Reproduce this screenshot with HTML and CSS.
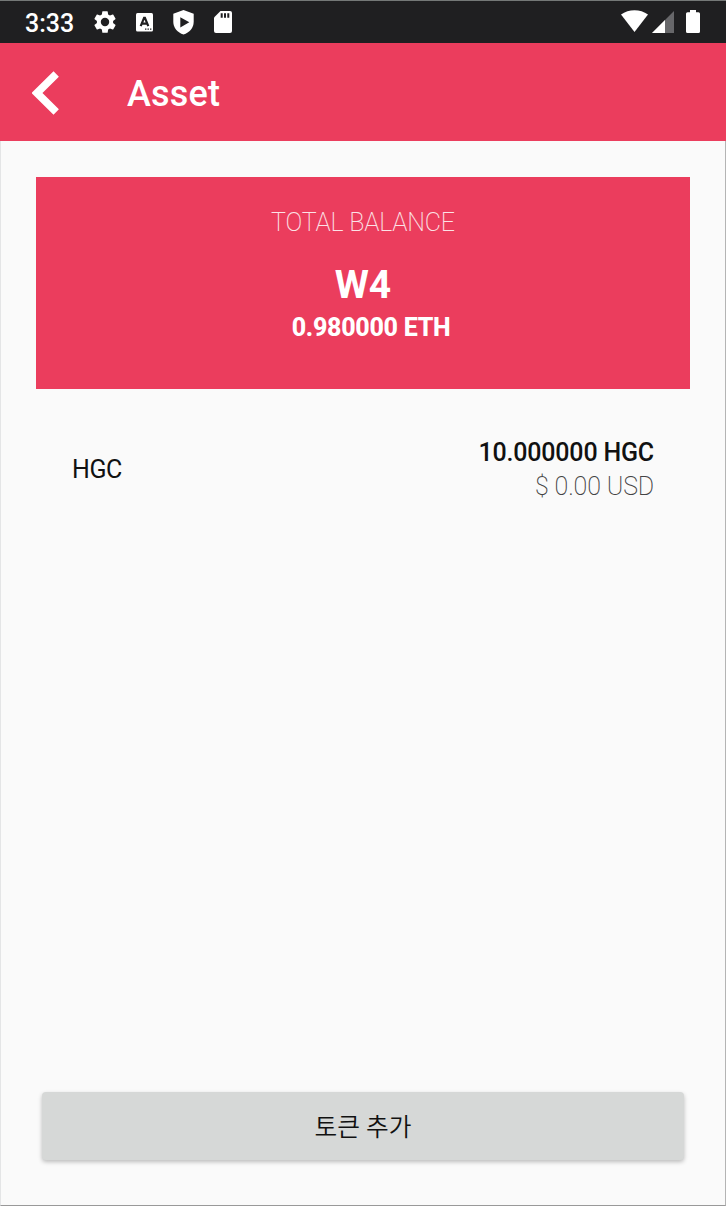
FILE: index.html
```html
<!DOCTYPE html>
<html lang="ko">
<head>
<meta charset="utf-8">
<title>Asset</title>
<link rel="stylesheet" href="styles.css">
</head>
<body>
<div class="screen">
  <div class="status">
    <span class="clock">3:33</span>
    <svg class="gear" width="26" height="26" viewBox="0 0 24 24"><path fill="#fff" d="M19.43 12.98c.04-.32.07-.64.07-.98s-.03-.66-.07-.98l2.11-1.65c.19-.15.24-.42.12-.64l-2-3.46c-.12-.22-.39-.3-.61-.22l-2.49 1c-.52-.4-1.08-.73-1.69-.98l-.38-2.65C14.46 2.18 14.25 2 14 2h-4c-.25 0-.46.18-.49.42l-.38 2.65c-.61.25-1.17.59-1.69.98l-2.49-1c-.23-.09-.49 0-.61.22l-2 3.46c-.13.22-.07.49.12.64l2.11 1.65c-.04.32-.07.65-.07.98s.03.66.07.98l-2.11 1.65c-.19.15-.24.42-.12.64l2 3.46c.12.22.39.3.61.22l2.49-1c.52.4 1.08.73 1.69.98l.38 2.65c.03.24.24.42.49.42h4c.25 0 .46-.18.49-.42l.38-2.65c.61-.25 1.17-.59 1.69-.98l2.49 1c.23.09.49 0 .61-.22l2-3.46c.12-.22.07-.49-.12-.64zM12 15.9a3.9 3.9 0 1 1 0-7.8 3.9 3.9 0 0 1 0 7.8z"/></svg>
    <svg class="letter" width="17" height="19" viewBox="0 0 17 19"><rect width="17" height="18.6" rx="1.5" fill="#fff"/><path d="M4.7 13.2 8.1 4.800h.8l3.400 8.400M6 10.700h5" fill="none" stroke="#1f1f21" stroke-width="2.200"/><path d="M9 15.500h1.400v1.300H9zM11.500 15.500h1.400v1.300h-1.400zM14 15.500h1.400v1.300H14z" fill="#1f1f21"/></svg>
    <svg class="shield" width="21" height="25" viewBox="0 0 21 25"><path fill="#fff" d="M10.5 0 20.7 3.8v8c0 6.2-4.2 11-10.2 12.7C4.5 22.800.3 18 .3 11.800v-8z"/><path fill="#1f1f21" d="M7.300 7.200v10.200l9-5.100z"/></svg>
    <svg class="card-icon" width="18" height="22" viewBox="0 0 18 22"><path fill="#fff" d="M6.500 0H16a2 2 0 0 1 2 2v18a2 2 0 0 1-2 2H2a2 2 0 0 1-2-2V6.500z"/><path fill="#1f1f21" d="M6.700 2.300h2v4.500h-2zM10 2.300h2v4.500h-2zM13.300 2.300h2v4.500h-2z"/></svg>
    <svg class="wifi" width="27" height="22" viewBox="0 0 28 22" preserveAspectRatio="none"><path fill="#fff" d="M0 4.600C8-1.300 20-1.300 28 4.600L14 22z"/></svg>
    <svg class="signal" width="22" height="22" viewBox="0 0 22 21" preserveAspectRatio="none"><path fill="#67676a" d="M22 0v21H0z"/><path fill="#fff" d="M13 8.600V21H0z"/></svg>
    <svg class="battery" width="14" height="23" viewBox="0 0 14 23"><path fill="#fff" d="M4 0h6v2.300h2.500A1.500 1.500 0 0 1 14 3.800v17.700a1.500 1.500 0 0 1-1.500 1.500h-11A1.500 1.500 0 0 1 0 21.500V3.800a1.500 1.500 0 0 1 1.500-1.500H4z"/></svg>
  </div>
  <header class="appbar">
    <svg class="back" width="28" height="44" viewBox="0 0 28 44"><path d="M24.200 3 5 22l19.200 19" fill="none" stroke="#fff" stroke-width="7.600"/></svg>
    <h1 class="title">Asset</h1>
  </header>
  <main class="content">
    <section class="balance">
      <div class="label">TOTAL BALANCE</div>
      <div class="wallet">W4</div>
      <div class="amount">0.980000 ETH</div>
    </section>
    <section class="token">
      <div class="symbol">HGC</div>
      <div class="values">
        <div class="quantity">10.000000 HGC</div>
        <div class="usd">$ 0.00 USD</div>
      </div>
    </section>
    <button class="add">토큰 추가</button>
  </main>
</div>
</body>
</html>
```
FILE: styles.css
```css
* { box-sizing: border-box; }
body { margin: 0; font-family: Roboto, "Noto Sans CJK KR", sans-serif; }
.screen {
  width: 726px;
  height: 1206px;
  display: flex;
  flex-direction: column;
  background: #fafafa;
  border-right: 1px solid #b4b4b4;
  border-bottom: 1px solid #999;
  border-left: 1px solid #e4e5e6;
}
.status {
  height: 43px;
  flex: none;
  display: flex;
  align-items: center;
  background: #1f1f21;
  border-top: 1px solid #747877;
  margin: 0 -1px;
  padding: 0 26px 0 25px;
}
.clock { padding-top: 3px; font-size: 25px; font-weight: 480; line-height: 30px; color: #fff; width: 67px; }
.letter { margin-left: 18px; }
.shield { margin-left: 20px; }
.card-icon { margin-left: 20px; }
.wifi { margin: 0 0 2px auto; }
.signal { margin: 0 0 1px 4px; }
.battery { margin: 0 0 1px 12px; }
.appbar {
  height: 98px;
  flex: none;
  display: flex;
  align-items: center;
  margin: 0 -1px;
  padding: 1px 0 0 32px;
  background: #eb3d5d;
}
.title { margin: 3px 0 0 67px; font-size: 36px; line-height: 44px; font-weight: 500; letter-spacing: .2px; color: #fff; }
.content { flex: 1; display: flex; flex-direction: column; padding: 36px 35px 45px; }
.balance {
  height: 212px;
  display: flex;
  flex-direction: column;
  align-items: center;
  padding-top: 30px;
  color: #fff;
  background: #eb3d5d;
}
.label { font-size: 25px; line-height: 32px; font-weight: 200; letter-spacing: -.18px; opacity: .85; }
.wallet { margin-top: 22px; font-size: 39px; line-height: 48px; font-weight: 700; }
.amount { margin: 4px 0 0 16px; font-size: 25px; line-height: 30px; font-weight: 800; letter-spacing: -.28px; }
.token {
  display: flex;
  align-items: center;
  justify-content: space-between;
  margin: 47px 36px 0;
  color: #111;
}
.symbol { font-size: 25px; line-height: 30px; letter-spacing: -.4px; }
.values { text-align: right; }
.quantity { font-size: 25px; line-height: 34px; font-weight: 500; letter-spacing: -.18px; }
.usd { font-size: 25px; line-height: 34px; font-weight: 200; letter-spacing: -.15px; color: #444; }
.add {
  height: 68px;
  margin: auto 6px 0;
  padding: 3px 0 0;
  border: 0;
  border-radius: 4px;
  background: #d6d8d7;
  box-shadow: 0 2px 4px rgba(0, 0, 0, .25);
  font: 350 24.700px/30px Roboto, "Noto Sans CJK KR", sans-serif;
  color: #111;
}
```
